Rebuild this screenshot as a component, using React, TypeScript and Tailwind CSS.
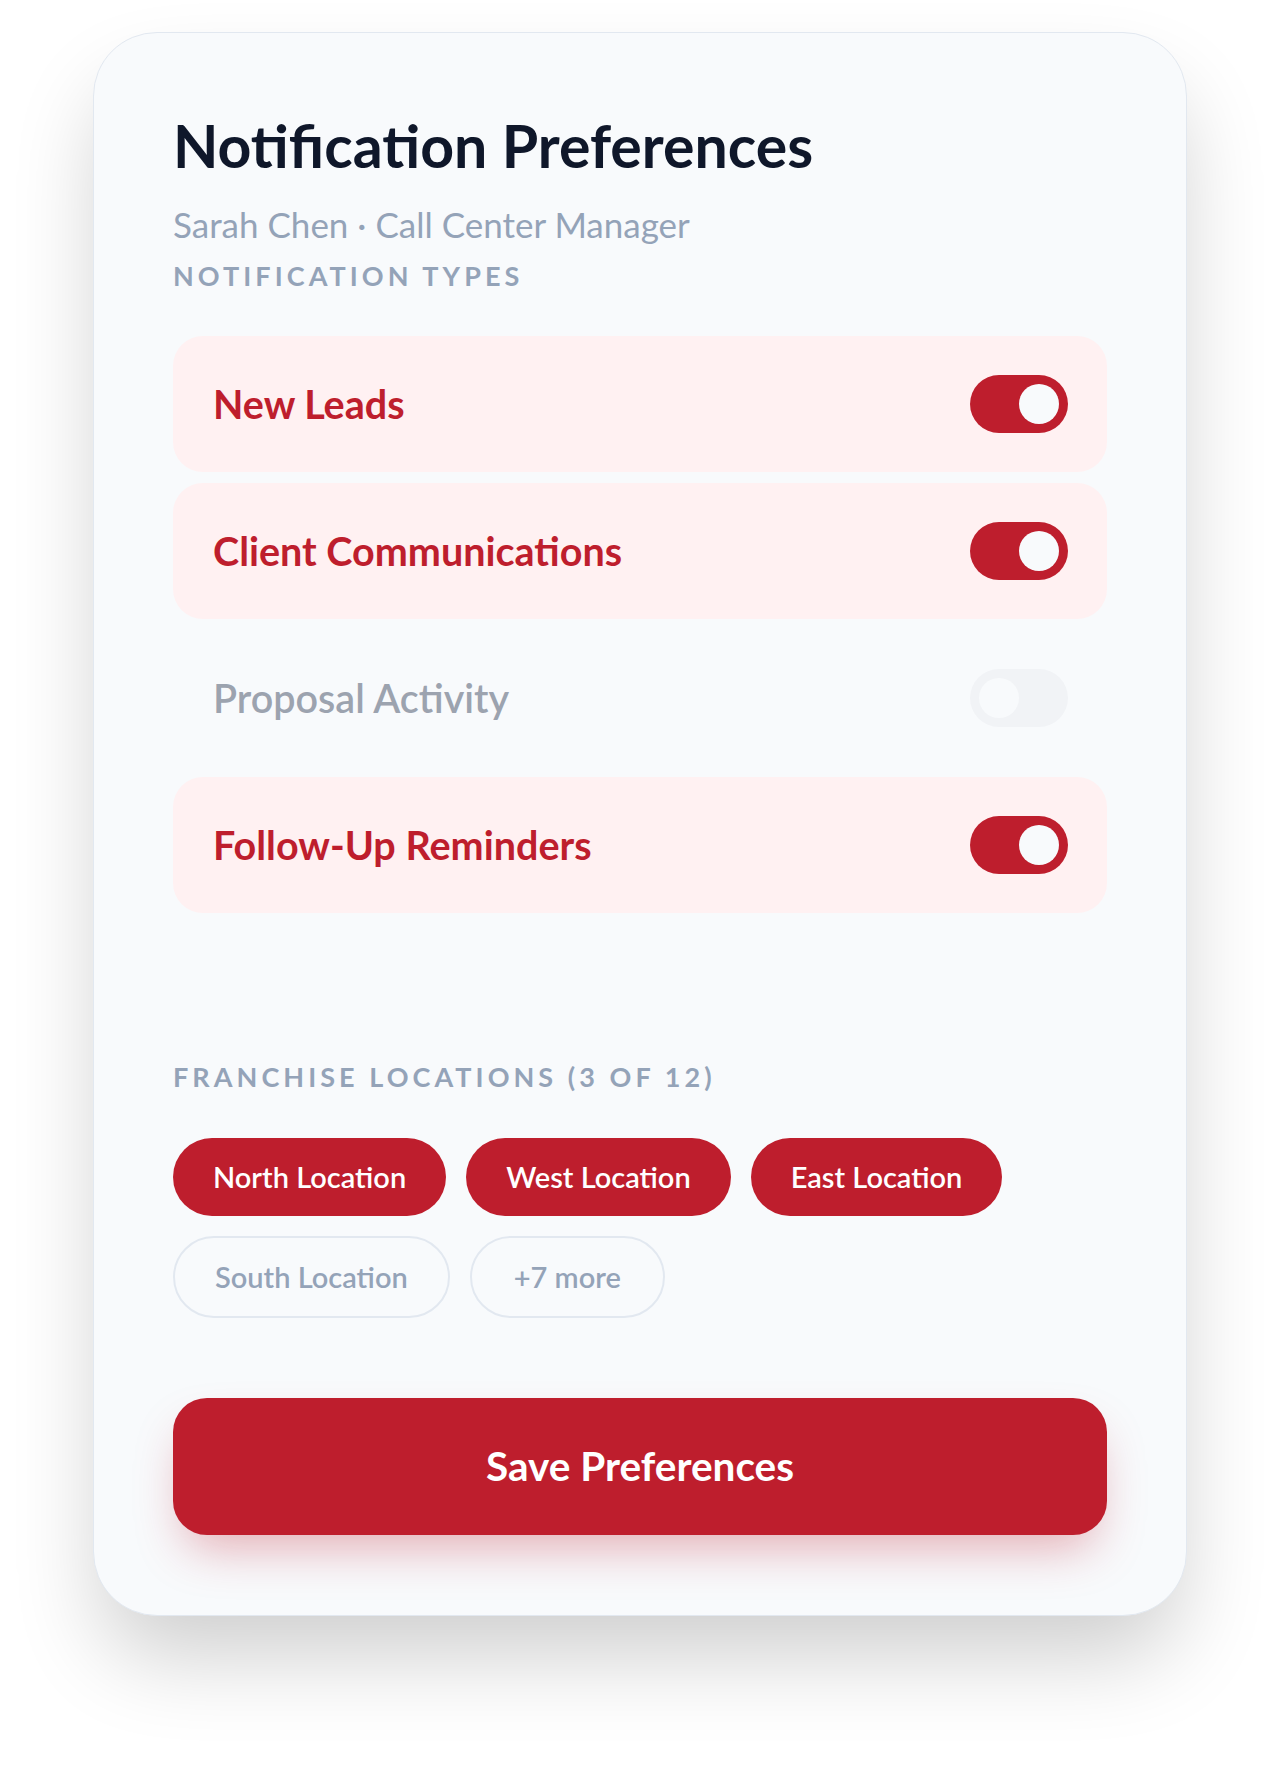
import React, { useState } from "react";

type Pref = { id: string; label: string; on: boolean };

const initialPrefs: Pref[] = [
  { id: "leads", label: "New Leads", on: true },
  { id: "comms", label: "Client Communications", on: true },
  { id: "proposal", label: "Proposal Activity", on: false },
  { id: "followup", label: "Follow-Up Reminders", on: true },
];

const initialLocations = [
  { id: "north", label: "North Location", selected: true },
  { id: "west", label: "West Location", selected: true },
  { id: "east", label: "East Location", selected: true },
  { id: "south", label: "South Location", selected: false },
];

function Toggle({ on, onClick }: { on: boolean; onClick: () => void }) {
  return (
    <button
      type="button"
      onClick={onClick}
      aria-pressed={on}
      className={
        on
          ? "flex h-[58px] w-[98px] shrink-0 items-center justify-end rounded-full bg-[#be1e2d] px-[9px]"
          : "flex h-[58px] w-[98px] shrink-0 items-center justify-start rounded-full bg-[#f1f3f6] px-[9px]"
      }
    >
      <span className="block h-[40px] w-[40px] rounded-full bg-[#f8fafc]" />
    </button>
  );
}

export default function App() {
  const [prefs, setPrefs] = useState(initialPrefs);
  const [locations, setLocations] = useState(initialLocations);

  const toggle = (id: string) =>
    setPrefs((p) => p.map((x) => (x.id === id ? { ...x, on: !x.on } : x)));
  const pick = (id: string) =>
    setLocations((l) => l.map((x) => (x.id === id ? { ...x, selected: !x.selected } : x)));

  return (
    <div className="min-h-[1770px] bg-white pt-[32px] font-['Lato',sans-serif]">
      <div className="mx-auto w-[1094px] rounded-[64px] border border-[#e2e8f0] bg-[#f8fafc] px-[79px] pb-[80px] pt-[79px] shadow-[0_48px_90px_-10px_rgba(0,0,0,0.2)]">
        <h1 className="text-[59px] font-bold leading-[68px] text-[#0f172a]">
          Notification Preferences
        </h1>
        <p className="mt-[24px] text-[35px] leading-[40px] text-[#94a3b8]">
          Sarah Chen · Call Center Manager
        </p>
        <h2 className="mt-[14px] text-[27px] font-bold uppercase leading-[36px] tracking-[0.15em] text-[#94a3b8]">
          Notification Types
        </h2>

        <div className="mt-[42px] flex flex-col gap-[11px]">
          {prefs.map((p) => (
            <div
              key={p.id}
              className={
                p.on
                  ? "flex h-[136px] items-center justify-between rounded-[30px] bg-[#fff1f2] pl-[40px] pr-[39px]"
                  : "flex h-[136px] items-center justify-between rounded-[30px] pl-[40px] pr-[39px]"
              }
            >
              <span
                className={
                  p.on
                    ? "text-[39.5px] font-bold text-[#be1e2d]"
                    : "text-[39.5px] font-semibold text-[#9ca3af]"
                }
              >
                {p.label}
              </span>
              <Toggle on={p.on} onClick={() => toggle(p.id)} />
            </div>
          ))}
        </div>

        <h2 className="mt-[146px] text-[27px] font-bold uppercase leading-[36px] tracking-[0.15em] text-[#94a3b8]">
          Franchise Locations (3 of 12)
        </h2>

        <div className="mt-[43px] flex flex-wrap items-start gap-[20px]">
          {locations.map((l) =>
            l.selected ? (
              <button
                key={l.id}
                type="button"
                onClick={() => pick(l.id)}
                className="h-[78px] rounded-full bg-[#be1e2d] px-[40px] text-[29px] font-semibold text-white"
              >
                {l.label}
              </button>
            ) : (
              <button
                key={l.id}
                type="button"
                onClick={() => pick(l.id)}
                className="h-[82px] rounded-full border-2 border-[#e2e8f0] px-[40px] text-[29px] font-semibold text-[#94a3b8]"
              >
                {l.label}
              </button>
            )
          )}
          <button
            type="button"
            className="h-[82px] rounded-full border-2 border-[#e2e8f0] px-[42px] text-[29px] font-semibold text-[#94a3b8]"
          >
            +7 more
          </button>
        </div>

        <button
          type="button"
          className="mt-[80px] flex h-[137px] w-full items-center justify-center rounded-[34px] bg-[#be1e2d] text-[40.5px] font-bold text-white shadow-[0_24px_48px_-12px_rgba(190,30,45,0.35)]"
        >
          Save Preferences
        </button>
      </div>
    </div>
  );
}
